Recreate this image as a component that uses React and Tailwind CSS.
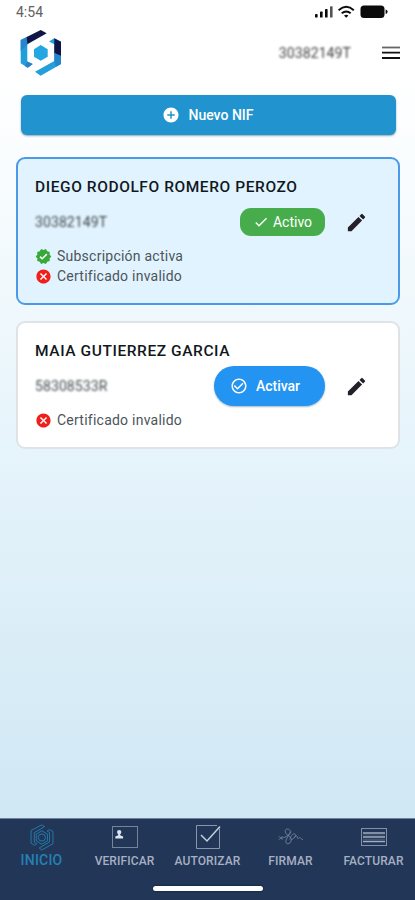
import { MdAddCircle, MdCancel, MdCheck, MdCheckCircleOutline, MdEdit, MdVerified } from 'react-icons/md'

const ACCOUNTS = [
  {
    name: 'DIEGO RODOLFO ROMERO PEROZO',
    nif: '30382149T',
    active: true,
    subscribed: true,
  },
  {
    name: 'MAIA GUTIERREZ GARCIA',
    nif: '58308533R',
    active: false,
    subscribed: false,
  },
]

function StatusBar() {
  return (
    <div className="flex h-6 items-center justify-between pl-4 pr-[27px]">
      <span className="text-[14px] leading-6 text-[#626262]">4:54</span>
      <svg width="74" height="14" viewBox="0 0 74 14" fill="#0b0b0b">
        <rect x="1" y="9" width="2.6" height="3.6" rx="0.7" />
        <rect x="6" y="6.5" width="2.6" height="6.1" rx="0.7" />
        <rect x="11" y="4" width="2.6" height="8.6" rx="0.7" />
        <rect x="16" y="1.2" width="2.6" height="11.4" rx="0.7" fill="#555" />
        <g fill="none" stroke="#0b0b0b" strokeWidth="1.9">
          <path d="M24.6 5.2q7.7-6.8 15.2 0" />
          <path d="M27.7 8.3q4.6-3.8 9 0" />
        </g>
        <path d="M30 10.6q2.2-1.6 4.4 0l-2.2 2.2z" />
        <rect x="46.5" y="0.5" width="24" height="12.6" rx="3.6" />
        <path d="M71.6 4.6q2 .4 2 2.2t-2 2.2z" />
      </svg>
    </div>
  )
}

function Logo() {
  return (
    <svg width="42" height="48" viewBox="0 0 42 48">
      <path d="M.7 11l6.6-3.3v24.8l5.4 2.5-5 3.7-7-4.4z" fill="#209fdb" />
      <path d="M.7 11l6.6-3.3v8L.7 22z" fill="#2586cc" />
      <path d="M7.3 32.5l5.4 2.5-5 3.7-2.7-1.7z" fill="#2b7fc6" />
      <path d="M6.700 8L20.700 1l6 3.300L7.300 15.300z" fill="#101548" />
      <path d="M29 12.5l5.3-3.2L41 12.7V35L20.7 46.7 15 42.7 34.3 32V15.3z" fill="#249fdb" />
      <path d="M34.3 9.3l6.7 3.4V27l-6.7-3z" fill="#101548" />
      <path d="M34.3 24l6.7 3v8l-5 2.8-1.7-5.8z" fill="#2586cc" />
      <path d="M20.7 16l7 4.3v7.4l-7 4-6.7-4v-7.4z" fill="#22a7e2" />
    </svg>
  )
}

function StatusLine({ ok, children }) {
  const Icon = ok ? MdVerified : MdCancel
  return (
    <div className="flex h-5 items-center gap-[5px]">
      <span className="relative flex size-[17px] items-center justify-center">
        <span className="absolute size-2.5 rounded-full bg-white" />
        <Icon className={ok ? 'relative size-[17px] text-[#36a938]' : 'relative size-[17px] text-[#f01f1c]'} />
      </span>
      <span className="text-[14px] tracking-[0.24px] text-[#4c555b]">{children}</span>
    </div>
  )
}

function AccountCard({ account }) {
  return (
    <article
      className={
        account.active
          ? 'h-[148px] rounded-[9px] border-2 border-[#4b9aea] bg-[#e1f3fe] pl-[17px] pr-[30px] pt-[18px]'
          : 'h-[128px] rounded-[9px] border-2 border-[#dfe3e5] bg-white pl-[17px] pr-[30px] pt-[18px]'
      }
    >
      <h2 className="whitespace-nowrap text-[15.5px] font-medium leading-5 tracking-[0.58px] text-[#11181d]">
        {account.name}
      </h2>
      <div className="flex h-[50px] items-center">
        <span className="text-sm tracking-[0.1px] text-[#42494d] blur-[1.2px]">{account.nif}</span>
        {account.active ? (
          <span className="ml-auto flex h-7 w-[85px] items-center justify-center gap-1 rounded-[11px] bg-[#47ad4c] text-[14px] text-white">
            <MdCheck className="size-4" />
            Activo
          </span>
        ) : (
          <button className="ml-auto flex h-10 w-[111px] items-center justify-center gap-2 rounded-full bg-[#2394f1] pr-[9px] text-[14px] font-medium text-white shadow-[0_1px_2px_rgba(30,80,130,0.4)]">
            <MdCheckCircleOutline className="size-[18px]" />
            Activar
          </button>
        )}
        <MdEdit className="ml-[20px] size-[23px] text-[#241f29]" />
      </div>
      <div className="-mt-px">
        {account.subscribed && <StatusLine ok>Subscripción activa</StatusLine>}
        <StatusLine>Certificado invalido</StatusLine>
      </div>
    </article>
  )
}

function HomeIcon() {
  return (
    <svg width="24" height="27" viewBox="0 0 42 48" fill="none" stroke="#2481b1" strokeWidth="1.6">
      <path d="M1.5 11.5L20.7 1.5l5 3-18.4 11v17l4.6 2.5-4.2 3-6.2-4z" />
      <path d="M30 12.5l4.3-2.4 6.2 3.2V35L20.7 46.2 16 42.7 34.3 32V15.3z" />
      <path d="M20.7 12l10 6v12l-10 6-10-6V18z" />
      <circle cx="20.7" cy="24" r="6.4" />
    </svg>
  )
}

function VerifyIcon() {
  return (
    <svg width="26" height="22" viewBox="0 0 26 22">
      <rect x="0.5" y="0.5" width="25" height="21" fill="none" stroke="#73849b" />
      <circle cx="7.2" cy="6.1" r="2.2" fill="#dbe3ed" />
      <path d="M6.2 7h2v2.200l2.900 1.200v2H3.300v-2l2.900-1.200z" fill="#dbe3ed" />
    </svg>
  )
}

function AuthorizeIcon() {
  return (
    <svg width="26" height="26" viewBox="0 0 26 26" fill="none">
      <path d="M22 1.5H1.5v23h23V4.5" stroke="#8797ab" />
      <path d="M6 11l6 6L25 2.5" stroke="#c3d0de" strokeWidth="1.5" />
    </svg>
  )
}

function SignIcon() {
  return (
    <svg width="26" height="20" viewBox="0 0 26 20" fill="none" stroke="#71829b" strokeWidth="0.9" strokeLinecap="round">
      <path d="M3 11c4 0 7-2 9-5 1.5-3-2-5-4-3.500-2 2 0 5 3 6.500 3 2 3 6 0 7.500-3 1-4-1.500-2.500-4.500C10.500 8 12 6.500 13 5" />
      <path d="M1.200 9.500l3 3M1.200 12.500l3-3" />
      <path d="M12 12c1-4 3.500-6 5-5 1.500 1.500-1 5-3.500 5.500M16 11c1.500-1.500 2.500-3 3-2s0 2.500 1 2.500 1.500-1.500 2.200-1c.8.800.6 1.500 2.300 2" />
    </svg>
  )
}

function InvoiceIcon() {
  return (
    <svg width="28" height="20" viewBox="0 0 28 20" fill="none" stroke="#8291a8">
      <rect x="1.5" y="1.5" width="25" height="17" />
      <path d="M3 6h22M3 10h22M3 14.5h22" stroke="#a1adbe" strokeWidth="1.3" />
      <path d="M3 8h22M3 12.3h22" stroke="#52647f" strokeWidth="0.8" />
    </svg>
  )
}

const TABS = [
  { label: 'INICIO', icon: HomeIcon, active: true },
  { label: 'VERIFICAR', icon: VerifyIcon },
  { label: 'AUTORIZAR', icon: AuthorizeIcon },
  { label: 'FIRMAR', icon: SignIcon },
  { label: 'FACTURAR', icon: InvoiceIcon },
]

function TabBar() {
  return (
    <nav className="flex h-[82px] flex-col border-t border-[#6e8198] bg-[#223657]">
      <div className="grid h-[65px] grid-cols-5 pt-[4px]">
        {TABS.map(({ label, icon: Icon, active }) => (
          <div key={label} className="flex flex-col items-center">
            <span className="flex h-[28px] items-center">
              <Icon />
            </span>
            <span
              className={
                active
                  ? 'text-[14px] font-medium leading-[18px] tracking-[0.2px] text-[#2581b4]'
                  : 'pt-0.5 text-[12px] font-medium leading-4 tracking-[0.1px] text-[#a5b0c2]'
              }
            >
              {label}
            </span>
          </div>
        ))}
      </div>
      <div className="mx-auto mt-0.5 h-[5px] w-[110px] rounded-full bg-white shadow-[0_0_2px_#071033]" />
    </nav>
  )
}

export default function App() {
  return (
    <div className="flex h-[900px] w-[415px] flex-col overflow-hidden bg-linear-to-b from-white from-8% via-[#e6f4fb] via-50% to-[#cfe7f4] to-92% font-['Roboto',sans-serif]">
      <StatusBar />
      <header className="flex h-[71px] items-start justify-between pl-5 pr-[15px] pt-[5px]">
        <Logo />
        <div className="flex h-[47px] items-center gap-[31px]">
          <span className="text-sm tracking-[0.1px] text-[#444] blur-[1.2px]">30382149T</span>
          <svg width="18" height="14" viewBox="0 0 18 14" stroke="#111" strokeWidth="1.8">
            <path d="M0 1.5h18" stroke="#666" />
            <path d="M0 6.7h18M0 12h18" />
          </svg>
        </div>
      </header>
      <main className="flex-1 px-4">
        <button className="ml-[4.5px] flex h-10 w-[375px] items-center justify-center gap-2 rounded-md bg-[#2193ce] text-sm font-medium text-white shadow-[0_1px_2px_rgba(20,60,90,0.45)]">
          <MdAddCircle className="size-[18px]" />
          Nuevo NIF
        </button>
        <section className="mt-[22px] flex w-[384px] flex-col gap-4">
          {ACCOUNTS.map((account) => (
            <AccountCard key={account.nif} account={account} />
          ))}
        </section>
      </main>
      <TabBar />
    </div>
  )
}
